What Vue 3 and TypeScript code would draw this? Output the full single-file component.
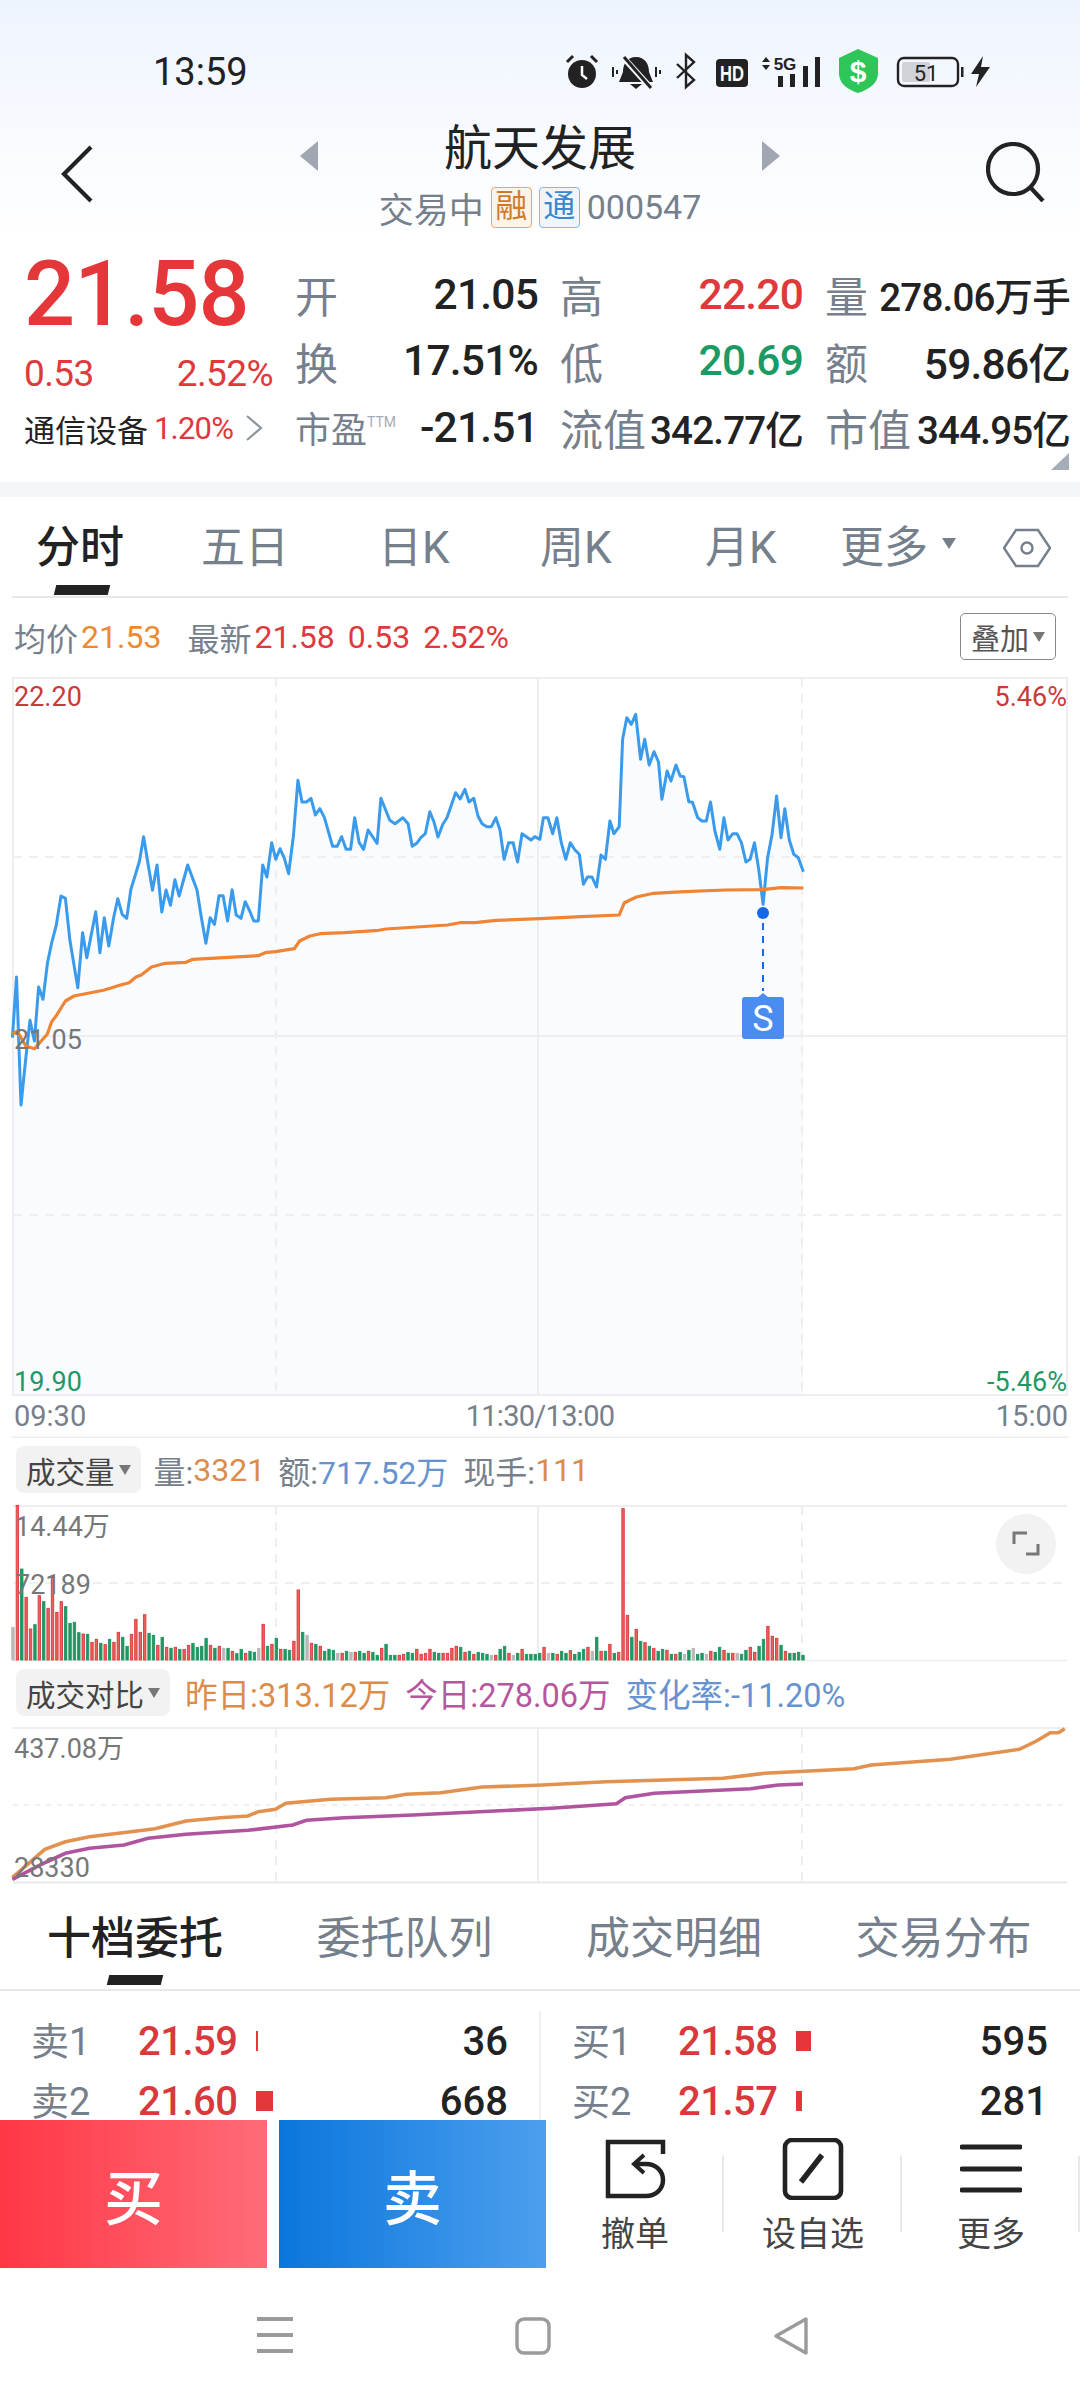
<script setup lang="ts">
// chart samples are read off the screenshot: [x, y] pairs in zoomed pixels
const toPath = (raw: number[], sx: number, ox: number, oy: number, sy = 3) => {
  const out: string[] = [];
  for (let i = 0; i < raw.length; i += 2) {
    out.push(`${(ox + raw[i] / sx).toFixed(1)},${(oy + raw[i + 1] / sy).toFixed(1)}`);
  }
  return out;
};

const priceA = toPath([
  36,1130, 48,948, 61,1332, 74,1200, 87,1078, 100,1140, 112,978, 125,1015, 138,905, 150,845, 163,795, 177,705, 190,712,
  203,838, 226,980, 240,815, 252,890, 278,752, 290,875, 303,770, 316,855, 330,770, 342,713, 355,760, 368,772, 380,685,
  392,645, 405,600, 417,527, 430,610, 443,688, 456,612, 470,753, 482,687, 495,733, 508,656, 520,705, 545,612, 572,687,
  585,770, 598,847, 610,770, 623,790, 636,704, 648,704, 661,780, 674,686, 686,762, 700,772, 712,722, 725,750, 737,780,
  750,780, 763,612, 775,648, 789,545, 801,595, 813,563, 826,592, 838,638, 852,525, 865,358, 877,423, 890,423, 903,412,
  916,462, 929,443, 942,470, 966,556, 979,556, 992,527, 1005,565, 1018,565, 1030,470, 1043,545, 1056,565, 1069,507,
  1095,547, 1106,412, 1132,478, 1147,488, 1170,470, 1185,488, 1197,556, 1210,547, 1222,530, 1235,518, 1248,452, 1260,482,
  1272,528, 1286,490, 1298,470, 1323,395, 1336,414, 1350,385, 1362,423, 1376,412, 1388,465, 1400,488, 1414,497, 1427,497,
  1440,470, 1452,507, 1464,595, 1477,545, 1490,545, 1503,603, 1516,518, 1542,537, 1553,527, 1568,535,
], 2.904, 0, 660);
const priceB = toPath([
  10,470, 23,470, 37,518, 49,470, 62,545, 75,595, 88,545, 101,566, 114,580, 126,670, 138,648, 151,648, 164,678, 177,582,
  190,595, 203,480, 215,518, 230,497, 240,235, 252,170, 265,190, 278,160, 292,295, 304,235, 317,312, 331,272, 344,303,
  354,415, 369,330, 380,360, 395,312, 407,345, 418,347, 432,422, 443,424, 458,470, 470,480, 483,480, 495,423, 508,510,
  522,565, 534,470, 546,537, 560,518, 572,518, 585,545, 598,603, 610,595, 623,545, 635,625, 648,730, 661,590, 674,520,
  687,405, 700,530, 711,443, 724,537, 737,580, 750,590, 765,632,
], 2.904, 540, 660);
const pricePts = [...priceA, ...priceB].join(' ');
const priceArea = `13,1394 ${pricePts} 803,1394`;

const avgPts = [
  ...toPath([
    36,400, 50,390, 75,435, 100,443, 137,400, 150,362, 163,345, 190,300, 215,285, 300,268, 320,262, 350,252, 375,245,
    395,228, 410,222, 440,198, 480,187, 540,184, 560,175, 650,170, 750,164, 770,155, 800,152, 855,143, 870,120, 900,105,
    930,98, 1000,95, 1100,88, 1120,84, 1300,72, 1335,65, 1380,65, 1440,58, 1568,53,
  ], 2.904, 0, 900),
  ...toPath([
    120,767, 230,762, 245,725, 280,708, 330,697, 420,692, 540,687, 640,686, 700,680, 765,681,
  ], 2.904, 540, 660),
].join(' ');

const cmpOrange = toPath([
  18,560, 40,520, 65,475, 95,452, 130,437, 190,422, 225,413, 270,390, 320,380, 360,375, 375,362, 400,355, 415,337, 480,325,
  560,320, 590,310, 640,305, 700,288, 780,283, 880,272, 1050,262, 1110,247, 1240,233, 1265,222, 1380,205, 1480,175, 1505,150,
  1525,125, 1537,125, 1546,113,
], 1.452, 0, 1690).join(' ');
const cmpPurple = toPath([
  18,565, 60,520, 95,487, 130,472, 180,462, 215,442, 270,430, 360,418, 425,402, 445,388, 500,380, 600,372, 800,352, 895,338,
  908,320, 950,307, 1090,293, 1130,282, 1166,279,
], 1.452, 0, 1690).join(' ');

// bar top in zoomed pixels + colour: r up, g down, y flat
const volRaw = `380y 14r 205g 290r 385r 372g 285r 303g 323r 225r 335r 303r 318g 368g 365g 396g 400r 401g 425r 416r 428g 432r
416g 425r 395r 410g 437g 401r 356r 395r 342r 398g 404g 434r 410g 440r 443g 440r 446g 446r 434r 428g 440g 437g 413g 434r
443g 437r 443y 443g 452r 459g 446g 458r 452g 455g 443y 371r 437g 431r 413g 446r 446g 449g 422r 268r 395g 404y 428r 431g
437r 452g 446g 449g 458y 458r 452g 455y 455r 452g 458g 452r 455g 464g 443r 431g 464g 464g 464r 461r 455g 458g 446r 461r
458r 446r 455g 458g 458r 458r 443r 437r 440g 455r 452g 461r 455g 458g 461g 464y 464r 446g 437g 458r 464y 458g 446r 461g
461g 461g 458g 440r 458y 458g 461r 452g 458g 450r 461g 455g 446g 440r 452y 410g 452r 452g 431r 458g 455r 24r 344r 410g
386r 422g 426r 437g 443r 452g 446g 449r 461g 461r 455g 461y 449g 443y 461g 458g 461y 452r 455g 440g 449r 458g 458r 458y
461g 449g 440r 455r 437g 416g 377r 407r 413r 434g 452r 458g 458g 455g 464g`;
const volTokens = volRaw.trim().split(/\s+/);
const volStep = (803 - 13) / (volTokens.length - 1);
const volColors: Record<string, [string, string]> = {
  r: ['#ea5f5f', '#dc3a3a'],
  g: ['#1f9763', '#1f9763'],
  y: ['#b8b8b8', '#b8b8b8'],
};
const volBars = volTokens.map((t, i) => {
  const h = (478 - parseInt(t)) / 3;
  const [fill, line] = volColors[t.slice(-1)];
  return { x: 13 + i * volStep - 1.2, y: 1659 - h, h, fill, line };
});

const mainTabs = ['分时', '五日', '日K', '周K', '月K'];
const depthTabs = ['十档委托', '委托队列', '成交明细', '交易分布'];
const sell = [
  { label: '卖1', price: '21.59', bar: 2, qty: '36' },
  { label: '卖2', price: '21.60', bar: 17, qty: '668' },
];
const buy = [
  { label: '买1', price: '21.58', bar: 15, qty: '595' },
  { label: '买2', price: '21.57', bar: 6, qty: '281' },
];
</script>

<template>
  <div class="page">
    <header class="head">
      <div class="status">
        <span class="clock">13:59</span>
        <svg class="status-icons" width="440" height="60" viewBox="560 45 440 60">
          <circle cx="582" cy="74" r="14" fill="#222" />
          <path d="M582 66v9l5 4" fill="none" stroke="#fff" stroke-width="2.5" />
          <path d="M567 62l6-6M597 62l-6-6" stroke="#222" stroke-width="3" />
          <path d="M636 57c9 0 13 7 13 15l4 10H619l4-10c0-8 4-15 13-15z" fill="#222" />
          <path d="M630 84h12l-6 5z" fill="#222" />
          <path d="M622 56l28 31" stroke="#f2f7ff" stroke-width="6" />
          <path d="M624 57l27 31" stroke="#222" stroke-width="3" />
          <path d="M613 67v10M617 70v4M656 67v10M660 70v4" stroke="#222" stroke-width="2" />
          <path d="M677 64l17 16-8 7V55l8 7-17 16" fill="none" stroke="#222" stroke-width="2.4" />
          <rect x="716" y="59" width="32" height="28" rx="4" fill="#222" />
          <text x="720" y="81" class="hd" textLength="24" lengthAdjust="spacingAndGlyphs">HD</text>
          <path d="M766 57l4 5h-8zM766 70l4-5h-8z" fill="#222" />
          <text x="785" y="70" class="fiveg" text-anchor="middle">5G</text>
          <path d="M778 76h5v11h-5zM790 74h5v13h-5zM803 66h5v21h-5zM815 57h5v30h-5z" fill="#222" />
          <path d="M858 49l20 9v15c0 10-8 16-20 20-12-4-19-10-19-20V58z" fill="#2fc659" />
          <text x="858" y="82" class="dollar" text-anchor="middle">$</text>
          <rect x="898" y="58" width="60" height="28" rx="6" fill="none" stroke="#222" stroke-width="2.4" />
          <rect x="902" y="62" width="28" height="20" rx="2" fill="#cfd2d6" />
          <rect x="961" y="67" width="2.5" height="10" fill="#222" />
          <text x="926" y="81" class="batt" text-anchor="middle">51</text>
          <path d="M983 56l-12 18h8l-3 13 14-20h-9z" fill="#222" />
        </svg>
      </div>
      <div class="nav">
        <svg class="back" width="34" height="60" viewBox="0 0 34 60">
          <path d="M31 3L4 30l27 27" fill="none" stroke="#222" stroke-width="4.2" />
        </svg>
        <div class="center">
          <div class="title-row">
            <span class="tri tri-l"></span>
            <span class="title">航天发展</span>
            <span class="tri tri-r"></span>
          </div>
          <div class="sub-row">
            <span>交易中</span>
            <span class="tag tag-o">融</span>
            <span class="tag tag-b">通</span>
            <span class="code">000547</span>
          </div>
        </div>
        <svg class="search" width="62" height="60" viewBox="0 0 62 60">
          <circle cx="27" cy="27" r="25" fill="none" stroke="#222" stroke-width="4.2" />
          <path d="M44 45l13 14" stroke="#222" stroke-width="4.2" />
        </svg>
      </div>
    </header>

    <section class="quote">
      <div class="q-left">
        <div class="q-price">21.58</div>
        <div class="q-chg"><span>0.53</span><span>2.52%</span></div>
        <div class="q-ind">
          <span class="ind-name">通信设备</span>
          <span class="ind-pct">1.20%</span>
          <svg width="20" height="28" viewBox="0 0 20 28"><path d="M3 2l14 12L3 26" fill="none" stroke="#8d949c" stroke-width="2.2" /></svg>
        </div>
      </div>
      <div class="q-col">
        <div class="stat"><span class="lab">开</span><span class="val">21.05</span></div>
        <div class="stat"><span class="lab">换</span><span class="val">17.51%</span></div>
        <div class="stat"><span class="lab small">市盈<sup>TTM</sup></span><span class="val">-21.51</span></div>
      </div>
      <div class="q-col">
        <div class="stat"><span class="lab">高</span><span class="val red">22.20</span></div>
        <div class="stat"><span class="lab">低</span><span class="val green">20.69</span></div>
        <div class="stat"><span class="lab">流值</span><span class="val tight">342.77亿</span></div>
      </div>
      <div class="q-col">
        <div class="stat"><span class="lab">量</span><span class="val tight">278.06万手</span></div>
        <div class="stat"><span class="lab">额</span><span class="val">59.86亿</span></div>
        <div class="stat"><span class="lab">市值</span><span class="val tight">344.95亿</span></div>
      </div>
      <span class="corner"></span>
    </section>

    <div class="band"></div>

    <nav class="tabs">
      <span v-for="(t, i) in mainTabs" :key="t" class="tab" :class="{ on: i === 0 }">{{ t }}</span>
      <span class="tab more">更多<i class="caret"></i></span>
      <svg width="48" height="40" viewBox="0 0 48 40">
        <path d="M1 20L13 2h22l12 18-12 18H13z" fill="none" stroke="#76808c" stroke-width="2.4" />
        <circle cx="24" cy="20" r="5.5" fill="none" stroke="#76808c" stroke-width="2.4" />
      </svg>
    </nav>

    <div class="info">
      <span class="grey">均价</span><span class="orange gap-t">21.53</span>
      <span class="grey gap-l">最新</span><span class="red gap-t">21.58</span>
      <span class="red gap-s">0.53</span><span class="red gap-s">2.52%</span>
      <span class="overlay-btn">叠加<i class="caret dark"></i></span>
    </div>

    <svg class="chart" width="1080" height="777" viewBox="0 660 1080 777">
      <polygon :points="priceArea" fill="#f9fbff" />
      <rect x="13" y="677" width="1054" height="717" fill="none" stroke="#eceef0" stroke-width="2" />
      <path d="M13 856H1067M13 1214H1067" stroke="#eeeff1" stroke-width="2" stroke-dasharray="9 7" />
      <path d="M13 1035H1067" stroke="#eceef0" stroke-width="2" />
      <path d="M276 677V1394M802 677V1394" stroke="#eeeff1" stroke-width="2" stroke-dasharray="9 7" />
      <path d="M538 677V1394" stroke="#eceef0" stroke-width="2" />
      <polyline :points="pricePts" fill="none" stroke="#3a9bec" stroke-width="3" stroke-linejoin="round" />
      <polyline :points="avgPts" fill="none" stroke="#ee8434" stroke-width="3.2" stroke-linejoin="round" />
      <circle cx="763" cy="912" r="6" fill="#1668e8" />
      <path d="M763 922V990" stroke="#1668e8" stroke-width="2" stroke-dasharray="7 6" />
      <path d="M763 992l6 5h-12z" fill="#4a8cf0" />
      <rect x="742" y="996" width="42" height="42" rx="3" fill="#4a8cf0" />
      <text x="763" y="1030" class="sig" text-anchor="middle">S</text>
      <text x="14" y="705" class="axis red-t">22.20</text>
      <text x="1067" y="705" class="axis red-t" text-anchor="end">5.46%</text>
      <text x="14" y="1048" class="axis grey-t">21.05</text>
      <text x="14" y="1390" class="axis green-t">19.90</text>
      <text x="1067" y="1390" class="axis green-t" text-anchor="end">-5.46%</text>
      <text x="14" y="1425" class="axis time">09:30</text>
      <text x="540" y="1425" class="axis time mid" text-anchor="middle">11:30/13:00</text>
      <text x="1068" y="1425" class="axis time" text-anchor="end">15:00</text>
      <path d="M12 1436.5H1068" stroke="#eceef0" stroke-width="2" />
    </svg>

    <div class="sub-head vol-head">
      <span class="pill">成交量<i class="caret dark"></i></span>
      <span class="grey">量:</span><span class="c-o">3321</span>
      <span class="grey gap-xs">额:</span><span class="c-b">717.52万</span>
      <span class="grey gap-m">现手:</span><span class="c-o">111</span>
    </div>

    <svg class="chart" width="1080" height="164" viewBox="0 1500 1080 164">
      <path d="M13 1505H1067" stroke="#eceef0" stroke-width="2" />
      <path d="M13 1582H1067" stroke="#eeeff1" stroke-width="2" stroke-dasharray="9 7" />
      <path d="M276 1505V1659M802 1505V1659" stroke="#eeeff1" stroke-width="2" stroke-dasharray="9 7" />
      <path d="M538 1505V1659" stroke="#eceef0" stroke-width="2" />
      <path d="M13 1659.5H1067" stroke="#eceef0" stroke-width="1.5" />
      <rect
        v-for="(b, i) in volBars"
        :key="i"
        :x="b.x"
        :y="b.y"
        width="2.4"
        :height="b.h"
        :fill="b.fill"
        :stroke="b.line"
        stroke-width="0.9"
      />
      <text x="15" y="1535" class="axis grey-t">14.44万</text>
      <text x="15" y="1593" class="axis grey-t">72189</text>
      <ellipse cx="1026" cy="1543" rx="30" ry="30" fill="#f2f2f2" />
      <path d="M1014 1543V1532H1027M1038 1543V1553H1026" fill="none" stroke="#777" stroke-width="3" />
    </svg>

    <div class="sub-head cmp-head">
      <span class="pill">成交对比<i class="caret dark"></i></span>
      <span class="c-o">昨日:313.12万</span>
      <span class="c-p">今日:278.06万</span>
      <span class="c-b">变化率:-11.20%</span>
    </div>

    <svg class="chart" width="1080" height="163" viewBox="0 1722 1080 163">
      <path d="M13 1727H1067" stroke="#eceef0" stroke-width="2" />
      <path d="M13 1804H1067" stroke="#eeeff1" stroke-width="2" stroke-dasharray="5 6" />
      <path d="M276 1727V1881M802 1727V1881" stroke="#eeeff1" stroke-width="2" stroke-dasharray="9 7" />
      <path d="M538 1727V1881" stroke="#eceef0" stroke-width="2" />
      <path d="M13 1881.5H1067" stroke="#e8e9eb" stroke-width="2" />
      <polyline :points="cmpOrange" fill="none" stroke="#e2914f" stroke-width="3.6" />
      <polyline :points="cmpPurple" fill="none" stroke="#b0549f" stroke-width="3.6" />
      <text x="14" y="1757" class="axis grey-t">437.08万</text>
      <text x="14" y="1876" class="axis grey-t">28330</text>
    </svg>

    <nav class="d-tabs">
      <span v-for="(t, i) in depthTabs" :key="t" class="tab" :class="{ on: i === 0 }">{{ t }}</span>
    </nav>

    <div class="depth">
      <div class="d-col left">
        <div v-for="r in sell" :key="r.label" class="d-row">
          <span class="d-lab">{{ r.label }}</span>
          <span class="d-price">{{ r.price }}</span>
          <span class="d-bar" :style="{ width: r.bar + 'px' }"></span>
          <span class="d-qty">{{ r.qty }}</span>
        </div>
      </div>
      <div class="d-col">
        <div v-for="r in buy" :key="r.label" class="d-row">
          <span class="d-lab">{{ r.label }}</span>
          <span class="d-price">{{ r.price }}</span>
          <span class="d-bar" :style="{ width: r.bar + 'px' }"></span>
          <span class="d-qty">{{ r.qty }}</span>
        </div>
      </div>
    </div>

    <footer class="actions">
      <button class="trade buy">买</button>
      <button class="trade sale">卖</button>
      <div class="act">
        <svg width="62" height="62" viewBox="0 0 62 62">
          <path d="M59 16V4H4v54h38c10 0 17-7 17-16s-7-16-17-16H32" fill="none" stroke="#222" stroke-width="4.5" />
          <path d="M40 17l-10 9 10 9" fill="none" stroke="#222" stroke-width="4" />
        </svg>
        <span>撤单</span>
      </div>
      <div class="act">
        <svg width="62" height="62" viewBox="0 0 62 62">
          <rect x="3" y="2" width="56" height="58" rx="7" fill="none" stroke="#222" stroke-width="4.6" />
          <path d="M19 44l21-27" stroke="#222" stroke-width="5.4" />
        </svg>
        <span>设自选</span>
      </div>
      <div class="act">
        <svg width="62" height="62" viewBox="0 0 62 62">
          <path d="M2 9h58M2 31h58M2 52h58" stroke="#222" stroke-width="5" stroke-linecap="round" />
        </svg>
        <span>更多</span>
      </div>
    </footer>

    <div class="sysnav">
      <svg width="36" height="36" viewBox="0 0 36 36"><path d="M0 2h36M0 18h36M0 34h36" stroke="#9b9b9b" stroke-width="4" /></svg>
      <svg width="36" height="38" viewBox="0 0 36 38"><rect x="2" y="2" width="32" height="34" rx="7" fill="none" stroke="#9b9b9b" stroke-width="3.4" /></svg>
      <svg width="36" height="38" viewBox="0 0 36 38"><path d="M33 2v34L3 19z" fill="none" stroke="#9b9b9b" stroke-width="3.4" stroke-linejoin="round" /></svg>
    </div>
  </div>
</template>

<style scoped>
.page {
  width: 1080px;
  height: 2400px;
  overflow: hidden;
  display: flex;
  flex-direction: column;
  background: #fff;
  color: #222;
  font-family: Roboto, "Noto Sans CJK SC", sans-serif;
}

.head {
  height: 240px;
  flex: none;
  background: linear-gradient(#eef4fe, #fff);
}

.status {
  height: 120px;
  display: flex;
  justify-content: space-between;
  align-items: flex-start;
  padding: 45px 80px 0 153px;
  box-sizing: border-box;
}

.clock {
  font-size: 38px;
  line-height: 54px;
}

.hd { font: 700 22px "Liberation Sans", sans-serif; fill: #fff; }
.fiveg { font: 700 17px "Liberation Sans", sans-serif; fill: #222; }
.dollar { font: 700 30px "Liberation Sans", sans-serif; fill: #fff; }
.batt { font: 400 22px Roboto, sans-serif; fill: #222; }

.nav {
  display: grid;
  grid-template-columns: 200px 680px 200px;
  align-items: start;
}

.back {
  margin: 24px 0 0 60px;
}

.search {
  margin: 22px 0 0 106px;
}

.center {
  display: flex;
  flex-direction: column;
  align-items: center;
}

.title-row {
  width: 480px;
  height: 58px;
  display: flex;
  justify-content: space-between;
  align-items: center;
}

.title {
  font-size: 48px;
  line-height: 58px;
}

.tri {
  width: 0;
  height: 0;
  border-top: 15px solid transparent;
  border-bottom: 15px solid transparent;
  margin-top: 14px;
}

.tri-l { border-right: 18px solid #a0a7b0; }
.tri-r { border-left: 18px solid #a0a7b0; }

.sub-row {
  display: flex;
  align-items: center;
  gap: 7px;
  height: 44px;
  margin-top: 7px;
  color: #76808c;
  font-size: 35px;
}

.tag {
  width: 41px;
  height: 41px;
  box-sizing: border-box;
  border-radius: 4px;
  font-size: 32px;
  line-height: 37px;
  text-align: center;
}

.tag-o { color: #d27a2c; background: #fdf3e7; border: 1.5px solid #e6a56a; }
.tag-b { color: #3d86cc; background: #eef6fd; border: 1.5px solid #86b7e0; }

.code {
  font-size: 34px;
}

.quote {
  position: relative;
  flex: none;
  height: 242px;
  box-sizing: border-box;
  padding: 21px 0 0 24px;
  display: grid;
  grid-template-columns: 249px 243px 243px 245px;
  column-gap: 22px;
  align-content: start;
}

.q-price {
  font-size: 90px;
  font-weight: 500;
  line-height: 66px;
  margin-top: 1px;
  color: #e5373a;
  letter-spacing: -1px;
}

.q-chg {
  display: flex;
  justify-content: space-between;
  margin-top: 26px;
  font-size: 37px;
  line-height: 40px;
  color: #e0393c;
  letter-spacing: -0.6px;
}

.q-ind {
  display: flex;
  align-items: center;
  margin-top: 14px;
  height: 40px;
}

.ind-name { font-size: 31px; color: #222; }
.ind-pct { font-size: 31px; color: #e0393c; margin: 0 11px 0 6px; letter-spacing: -0.8px; }

.q-col {
  display: grid;
  grid-template-rows: repeat(3, 66.5px);
}

.stat {
  display: flex;
  justify-content: space-between;
  align-items: center;
}

.lab {
  font-size: 43px;
  color: #76808c;
  white-space: nowrap;
}

.lab.small {
  font-size: 36px;
}

.lab sup {
  font-size: 14px;
  vertical-align: 16px;
  line-height: 0;
  color: #a4adb8;
}

.val {
  font-size: 42.5px;
  font-weight: 500;
  white-space: nowrap;
  letter-spacing: -0.8px;
}

.val.tight {
  font-size: 38.5px;
  letter-spacing: -0.8px;
}

.red { color: #e0393c; }
.green { color: #1c9a64; }
.orange { color: #ed8a2d; }
.grey { color: #76808c; }

.corner {
  position: absolute;
  right: 11px;
  bottom: 12px;
  width: 0;
  height: 0;
  border-left: 18px solid transparent;
  border-bottom: 17px solid #a4adb8;
}

.band {
  height: 15px;
  flex: none;
  background: #f4f5f6;
}

.tabs {
  flex: none;
  height: 101px;
  box-sizing: border-box;
  padding-left: 36px;
  display: grid;
  grid-template-columns: 165px 177px 162px 165px 135px 163px auto;
  align-items: center;
  justify-items: start;
  position: relative;
}

.tabs::after,
.d-tabs::after {
  content: "";
  position: absolute;
  left: 12px;
  right: 12px;
  bottom: 0;
  height: 2px;
  background: #e8e8e8;
}

.tab {
  position: relative;
  font-size: 44px;
  line-height: 60px;
  color: #76808c;
  white-space: nowrap;
}

.tab.on {
  color: #222;
  font-weight: 500;
}

.tabs .tab.on::after,
.d-tabs .tab.on::after {
  content: "";
  position: absolute;
  z-index: 1;
  height: 10px;
  width: 54px;
  background: #222;
  transform: skewX(-14deg);
}

.tabs .tab.on::after {
  left: 19px;
  top: 67px;
}

.d-tabs .tab.on::after {
  left: 61px;
  top: 66px;
}

.more {
  display: flex;
  align-items: center;
}

.caret {
  display: inline-block;
  width: 0;
  height: 0;
  border-left: 7px solid transparent;
  border-right: 7px solid transparent;
  border-top: 11px solid #76808c;
  margin-left: 14px;
  margin-top: -8px;
}

.caret.dark {
  border-top-color: #777;
  margin-left: 4px;
  margin-top: 0;
  border-left-width: 6px;
  border-right-width: 6px;
  border-top-width: 10px;
}

.info {
  flex: none;
  height: 63px;
  box-sizing: border-box;
  padding: 14px 24px 0 14px;
  display: flex;
  align-items: center;
  font-size: 32px;
}

.gap-t { margin-left: 3px; }
.gap-l { margin-left: 26px; }
.gap-s { margin-left: 13px; }
.gap-xs { margin-left: 13px; }
.gap-m { margin-left: 15px; }

.overlay-btn {
  margin-left: auto;
  width: 96px;
  height: 47px;
  box-sizing: border-box;
  border: 1.5px solid #888;
  border-radius: 5px;
  color: #555;
  font-size: 29px;
  display: flex;
  align-items: center;
  justify-content: center;
}

.chart {
  display: block;
  flex: none;
}

.axis {
  font-family: Roboto, "Noto Sans CJK SC", sans-serif;
  font-size: 27px;
}

.red-t { fill: #c93a3a; }
.green-t { fill: #1c9a64; }
.grey-t { fill: #777; }
.time { fill: #76808c; font-size: 29px; }
.mid { letter-spacing: -0.7px; }

.sig {
  font-family: Roboto, sans-serif;
  font-size: 36px;
  fill: #fff;
}

.sub-head {
  flex: none;
  display: flex;
  align-items: center;
  padding-left: 16px;
  font-size: 32px;
}

.vol-head { height: 63px; }
.cmp-head { height: 58px; gap: 15px; font-size: 32.5px; padding-bottom: 3px; box-sizing: border-box; }

.pill {
  height: 47px;
  box-sizing: border-box;
  padding: 0 10px;
  border-radius: 8px;
  background: #f2f2f2;
  color: #444;
  font-size: 29.5px;
  display: flex;
  align-items: center;
}

.vol-head .pill {
  margin-right: 13px;
}

.c-o { color: #dc8c4a; }
.c-b { color: #6693cf; }
.c-p { color: #b5579f; }

.d-tabs {
  position: relative;
  flex: none;
  height: 105px;
  box-sizing: border-box;
  padding-left: 47px;
  display: grid;
  grid-template-columns: repeat(4, 269.5px);
  align-items: center;
}

.d-tabs::after {
  left: 0;
  right: 0;
}

.d-tabs .tab {
  font-size: 44px;
}

.depth {
  flex: 1;
  min-height: 0;
  overflow: hidden;
  display: grid;
  grid-template-columns: 540px 540px;
  align-content: start;
  padding-top: 20px;
}

.d-col {
  padding: 0 32px;
}

.d-col.left {
  border-right: 2px solid #f0f0f0;
  padding: 0 31px;
  box-sizing: border-box;
  width: 541px;
}

.d-row {
  height: 60px;
  display: flex;
  align-items: center;
}

.d-lab {
  width: 106px;
  margin-top: -5px;
  font-size: 38px;
  color: #76808c;
}

.d-col.left .d-price {
  margin-left: 1px;
}

.d-price {
  width: 118px;
  font-size: 40px;
  font-weight: 500;
  color: #d9393c;
  letter-spacing: -0.5px;
}

.d-bar {
  height: 20px;
  background: #e5373a;
}

.d-qty {
  margin-left: auto;
  font-size: 40px;
  font-weight: 500;
}

.actions {
  flex: none;
  height: 148px;
  background: #fff;
  display: flex;
}

.trade {
  width: 267px;
  border: 0;
  padding: 0;
  color: #fff;
  font: 500 59px "Noto Sans CJK SC", sans-serif;
}

.buy {
  background: linear-gradient(90deg, #ff3745, #ff6b78);
}

.sale {
  margin-left: 12px;
  background: linear-gradient(90deg, #0a76dc, #4d9fee);
}

.act {
  width: 178px;
  height: 148px;
  box-sizing: border-box;
  padding-top: 18px;
  position: relative;
  display: flex;
  flex-direction: column;
  align-items: center;
  gap: 14px;
  font-size: 34px;
  color: #444;
  line-height: 40px;
}

.act::after {
  content: "";
  position: absolute;
  right: 0;
  top: 36px;
  width: 2px;
  height: 76px;
  background: #e8e8e8;
}

.sysnav {
  flex: none;
  height: 132px;
  box-sizing: border-box;
  display: grid;
  grid-template-columns: 258px 258px 258px;
  padding: 49px 0 0 257px;
  align-content: start;
}
</style>

<style>
html, body {
  margin: 0;
  background: #fff;
}
</style>
